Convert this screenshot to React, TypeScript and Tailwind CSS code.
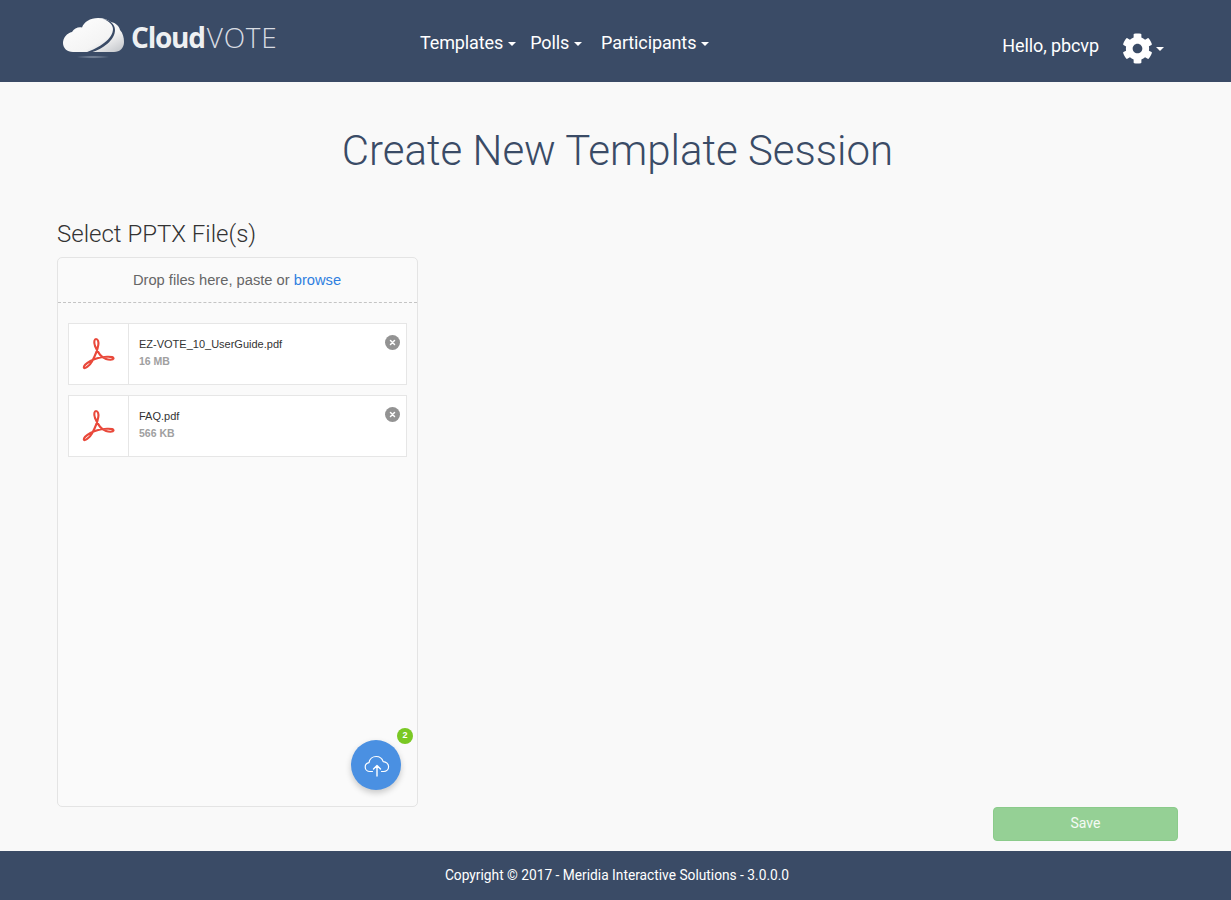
import React from 'react';
import { FaCog } from 'react-icons/fa';

function Caret({ gap = 'ml-[5px]' }: { gap?: string }) {
  return <span className={`${gap} inline-block h-0 w-0 border-x-[4px] border-t-[4px] border-x-transparent border-t-white align-middle`} />;
}

function Logo() {
  return (
    <div className="flex items-center">
      <svg width="68" height="46" viewBox="0 0 68 46" className="mt-[6px]">
        <defs>
          <linearGradient id="cloudFill" x1="0" y1="0" x2="1" y2="1">
            <stop offset="0" stopColor="#ffffff" />
            <stop offset="0.65" stopColor="#f4f4f4" />
            <stop offset="1" stopColor="#bfc2c7" />
          </linearGradient>
          <radialGradient id="cloudShadow">
            <stop offset="0" stopColor="#8592a5" />
            <stop offset="1" stopColor="#3a4b66" />
          </radialGradient>
        </defs>
        <path
          d="M11 35 C5 35 1 31 1 26 C1 21 5 16 10 15 C12 11 17 9.5 20 10.5 C22 5 28 1 36 1 C42 1 46 3 49 5 C54 6 57 9 58 13 C61 16 62 21 62 25 C62 31 58 35 52 35 Z"
          fill="url(#cloudFill)"
        />
        <path d="M24 35.5 C37 31 51 22 51 12 C51 8 47 4 41 2 C48 3 53 7 53 13 C53 23 41 32 29 35.5 Z" fill="#3a4b66" />
        <ellipse cx="31" cy="40" rx="17" ry="1.6" fill="url(#cloudShadow)" />
      </svg>
      <span className="ml-[1px] flex items-baseline font-['Open_Sans',sans-serif] text-[28px] leading-none text-[#eef0f2]">
        <span className="font-bold tracking-[-1.2px]">Cloud</span>
        <span className="ml-[2px] font-light tracking-[0.7px] text-[#d8dce2]">VOTE</span>
      </span>
    </div>
  );
}

function PdfIcon() {
  return (
    <svg width="34" height="34" viewBox="0 0 34 34" fill="none" stroke="#e9493b" strokeWidth="2.1" strokeLinejoin="round" className="mr-[1px]">
      <path d="M2.8 30.5 C2.5 28.5 6 26 9.5 24 C15 21 20 20 26 19.8 C30 19.6 33 20.3 32.5 21.6 C32 23 28 23 25 22 C20 20.5 16.5 15 14 9 C12.5 5 13.5 2 15 2 C17 2 17.8 5 17.3 8 C16.5 13 14 19 11 24.5 C8.5 29 3.3 32.5 2.8 30.5 Z" />
    </svg>
  );
}

function FileRow({ name, size }: { name: string; size: string }) {
  return (
    <div className="relative flex h-[62px] border border-[#e6e6e6] bg-white">
      <div className="flex w-[60px] shrink-0 items-center justify-center border-r border-[#e6e6e6]">
        <PdfIcon />
      </div>
      <div className="pl-[10px] pt-[13px] font-['Liberation_Sans',sans-serif] text-[11px] leading-[13px]">
        <div className="mt-[1px] text-[#333333]">{name}</div>
        <div className="mt-[4px] text-[10.5px] font-bold text-[#a0a0a0]">{size}</div>
      </div>
      <div className="absolute right-[6px] top-[11px] flex h-[15px] w-[15px] items-center justify-center rounded-full bg-[#939393]">
        <svg width="7" height="7" viewBox="0 0 7 7" stroke="#ffffff" strokeWidth="1.5" strokeLinecap="round">
          <path d="M1.5 1.5 L5.5 5.5 M5.5 1.5 L1.5 5.5" />
        </svg>
      </div>
    </div>
  );
}

export default function App() {
  return (
    <div className="flex h-[900px] flex-col bg-[#f9f9f9] font-['Roboto',sans-serif]">
      <header className="flex h-[82px] shrink-0 items-start bg-[#3a4b66] text-white">
        <div className="ml-[62px] w-[358px] pt-[11px]">
          <Logo />
        </div>
        <nav className="flex pt-[32px] text-[18px] leading-[22px] tracking-[-0.12px]">
          <a className="mr-[14px]">Templates<Caret /></a>
          <a className="mr-[19px]">Polls<Caret /></a>
          <a>Participants<Caret /></a>
        </nav>
        <div className="ml-auto mr-[67px] flex items-center pt-[33px] text-[18px] leading-[22px] tracking-[-0.1px]">
          <span className="mb-[5px]">Hello, pbcvp</span>
          <FaCog className="ml-[23px] h-[31px] w-[31px]" />
          <Caret gap="ml-[3px]" />
        </div>
      </header>

      <main className="flex min-h-0 flex-1 flex-col px-[57px]">
        <h1 className="ml-[4px] mt-[42px] text-center text-[42px] font-light leading-[54px] text-[#3a4b66]">
          Create New Template Session
        </h1>
        <div className="mt-[41px] flex items-end justify-between">
          <div>
            <h2 className="text-[24px] font-light leading-[30px] text-[#333333]">Select PPTX File(s)</h2>
            <div className="relative mt-[8px] h-[550px] w-[361px] rounded-[5px] border border-[#e4e4e4] bg-[#fafafa]">
              <div className="h-[45px] border-b border-dashed border-[#c4c4c4] pr-[1px] pt-[13px] text-center font-['Liberation_Sans',sans-serif] text-[14.7px] leading-[18px] text-[#666666]">
                Drop files here, paste or <span className="text-[#2f7fe0]">browse</span>
              </div>
              <div className="flex flex-col gap-[10px] px-[10px] pt-[20px]">
                <FileRow name="EZ-VOTE_10_UserGuide.pdf" size="16 MB" />
                <FileRow name="FAQ.pdf" size="566 KB" />
              </div>
              <div className="absolute bottom-[16px] right-[16px] flex h-[50px] w-[50px] items-center justify-center rounded-full bg-[#4a90e2] pl-[1px] pt-[1px] shadow-[0_3px_6px_rgba(0,0,0,0.2)]">
                <svg width="26" height="22" viewBox="0 0 26 22" fill="none" stroke="#ffffff" strokeWidth="1.2" strokeLinecap="round" strokeLinejoin="round">
                  <path d="M8.5 16.5 H6 C3 16.5 1.2 14.3 1.2 12 C1.2 9.7 2.8 8 5 7.6 C5.5 4 8.6 1.5 12.2 1.5 C15.6 1.5 18.2 3.5 19.2 6.6 C22.2 6.7 24.6 9 24.6 11.8 C24.6 14.5 22.4 16.5 19.8 16.5 H17.5" />
                  <path d="M13 21 V10.5 M9.5 14 L13 10.5 L16.5 14" strokeWidth="1.4" />
                </svg>
              </div>
              <div className="absolute bottom-[62px] right-[4px] flex h-[16px] w-[16px] items-center justify-center rounded-full bg-[#7ac824] font-['Liberation_Sans',sans-serif] text-[9px] font-bold text-white">
                2
              </div>
            </div>
          </div>
          <button className="mb-[-34px] mr-[-4px] h-[34px] w-[185px] rounded-[4px] border border-[#8bcb8b] bg-[#95d095] pb-[2px] text-[14px] text-white/90">
            Save
          </button>
        </div>
      </main>

      <footer className="flex h-[49px] shrink-0 items-center justify-center bg-[#3a4b66] pl-[3px] text-[13.75px] text-white">
        Copyright © 2017 - Meridia Interactive Solutions - 3.0.0.0
      </footer>
    </div>
  );
}
